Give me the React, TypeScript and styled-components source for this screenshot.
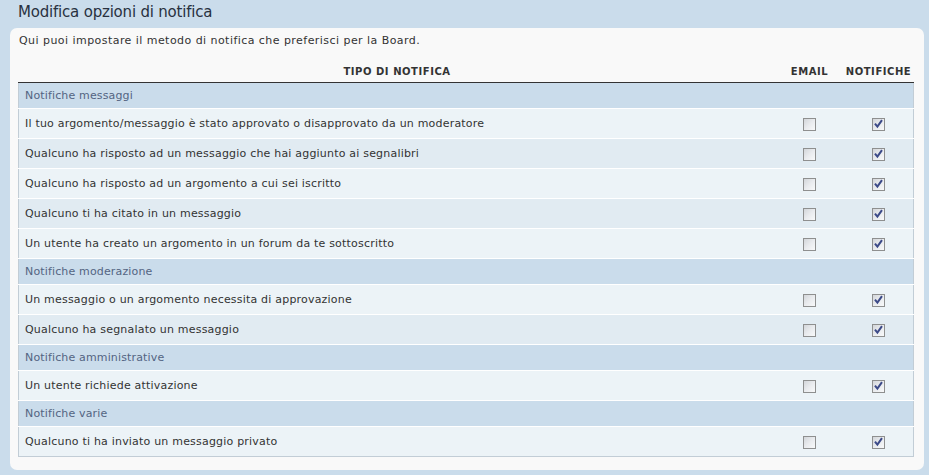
import React from 'react';
import styled, { createGlobalStyle } from 'styled-components';

const GlobalStyle = createGlobalStyle`
  html, body {
    margin: 0;
    padding: 0;
    background-color: #cadceb;
  }
  body {
    font-family: "DejaVu Sans", Verdana, sans-serif;
    color: #333333;
  }
`;

const Page = styled.div`
  width: 929px;
  height: 475px;
  box-sizing: border-box;
  padding: 0 5px 5px 10px;
`;

const Title = styled.h2`
  margin: 0;
  padding: 3px 0 0 8px;
  height: 28px;
  box-sizing: border-box;
  font-size: 15px;
  letter-spacing: -0.2px;
  font-weight: normal;
  color: #28313f;
`;

const Panel = styled.div`
  background-color: #f9f9f9;
  border-radius: 7px;
  padding: 6px 10px 14px 8px;
  height: 442px;
  box-sizing: border-box;
`;

const Intro = styled.p`
  margin: 0 0 12px 1px;
  font-size: 11px;
  letter-spacing: 0.45px;
  line-height: 14px;
`;

const Table = styled.table`
  width: 100%;
  border-collapse: collapse;
  border-spacing: 0;
`;

const HeadCell = styled.th<{ $width?: number }>`
  width: ${({ $width }) => ($width ? `${$width}px` : 'auto')};
  height: 22px;
  padding: 0;
  font-size: 10px;
  letter-spacing: 0.55px;
  font-weight: bold;
  text-transform: uppercase;
  color: #333333;
  text-align: center;
  border-bottom: 1px solid #333333;
`;

const Body = styled.tbody`
  border-left: 1px solid #c2cdd6;
  border-right: 1px solid #c2cdd6;
  border-bottom: 1px solid #c2cdd6;
`;

const SectionCell = styled.td`
  height: 25px;
  padding: 0 0 0 6px;
  background-color: #cadceb;
  border-top: 1px solid #ffffff;
  font-size: 11px;
  letter-spacing: 0.15px;
  color: #536482;
`;

const Row = styled.tr<{ $alt: boolean }>`
  background-color: ${({ $alt }) => ($alt ? '#e1ebf2' : '#ecf3f7')};
`;

const Cell = styled.td<{ $center?: boolean }>`
  height: 29px;
  padding: ${({ $center }) => ($center ? '0' : '0 0 0 6px')};
  border-top: 1px solid #ffffff;
  font-size: 11px;
  letter-spacing: 0.2px;
  color: #333333;
  text-align: ${({ $center }) => ($center ? 'center' : 'left')};
  vertical-align: middle;
`;

const Box = styled.span`
  display: inline-block;
  width: 13px;
  height: 13px;
  box-sizing: border-box;
  border: 1px solid #8e8f8f;
  background: linear-gradient(135deg, #d3d6da 0%, #e9ebee 50%, #f8f9fa 100%);
  vertical-align: middle;
  position: relative;
  top: 1px;
`;

const Check = styled.svg`
  display: block;
  width: 11px;
  height: 11px;
`;

const CheckBox = ({ checked }: { checked: boolean }) => (
  <Box>
    {checked && (
      <Check viewBox="0 0 11 11">
        <path d="M2.6 5.4 L4.4 7.6 L8.4 1.9" fill="none" stroke="#3c4a88" strokeWidth="2" strokeLinecap="square" />
      </Check>
    )}
  </Box>
);

type Group = {
  name: string,
  items: string[],
};

const groups: Group[] = [
  {
    name: 'Notifiche messaggi',
    items: [
      'Il tuo argomento/messaggio è stato approvato o disapprovato da un moderatore',
      'Qualcuno ha risposto ad un messaggio che hai aggiunto ai segnalibri',
      'Qualcuno ha risposto ad un argomento a cui sei iscritto',
      'Qualcuno ti ha citato in un messaggio',
      'Un utente ha creato un argomento in un forum da te sottoscritto',
    ],
  },
  {
    name: 'Notifiche moderazione',
    items: [
      'Un messaggio o un argomento necessita di approvazione',
      'Qualcuno ha segnalato un messaggio',
    ],
  },
  {
    name: 'Notifiche amministrative',
    items: ['Un utente richiede attivazione'],
  },
  {
    name: 'Notifiche varie',
    items: ['Qualcuno ti ha inviato un messaggio privato'],
  },
];

const App = () => {
  return (
    <>
      <GlobalStyle />
      <Page>
        <Title>Modifica opzioni di notifica</Title>
        <Panel>
          <Intro>Qui puoi impostare il metodo di notifica che preferisci per la Board.</Intro>
          <Table>
            <thead>
              <tr>
                <HeadCell>Tipo di notifica</HeadCell>
                <HeadCell $width={68}>Email</HeadCell>
                <HeadCell $width={70}>Notifiche</HeadCell>
              </tr>
            </thead>
            <Body>
              {groups.map((group) => (
                <React.Fragment key={group.name}>
                  <tr>
                    <SectionCell colSpan={3}>{group.name}</SectionCell>
                  </tr>
                  {group.items.map((item, i) => (
                    <Row key={item} $alt={i % 2 === 1}>
                      <Cell>{item}</Cell>
                      <Cell $center><CheckBox checked={false} /></Cell>
                      <Cell $center><CheckBox checked /></Cell>
                    </Row>
                  ))}
                </React.Fragment>
              ))}
            </Body>
          </Table>
        </Panel>
      </Page>
    </>
  );
};

export default App;
